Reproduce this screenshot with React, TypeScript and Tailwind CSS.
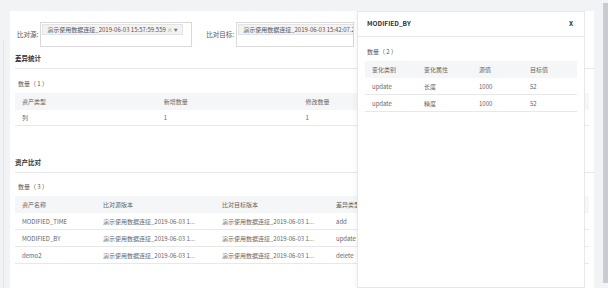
import React from 'react'

const font = { fontFamily: '"Noto Sans CJK SC", "Liberation Sans", sans-serif' }

const srcTag = '演示使用数据连接_2019-06-03 15:57:59.559'
const dstTag = '演示使用数据连接_2019-06-03 15:42:07.231'
const ver = '演示使用数据连接_2019-06-03 1...'

const assets = [
  { name: 'MODIFIED_TIME', src: ver, dst: ver, type: 'add' },
  { name: 'MODIFIED_BY', src: ver, dst: ver, type: 'update' },
  { name: 'demo2', src: ver, dst: ver, type: 'delete' },
]

const changes = [
  { kind: 'update', attr: '长度', from: '1000', to: '52' },
  { kind: 'update', attr: '精度', from: '1000', to: '52' },
]

function SelectBox({ label, value, width, arrow }: { label: string; value: string; width: string; arrow?: boolean }) {
  return (
    <div className="flex items-center">
      <span className="mr-[2px] text-[6.5px] text-[#555]">{label}</span>
      <div className={`h-[25px] shrink-0 overflow-hidden border border-[#d9d9d9] bg-white p-[1px] ${width}`}>
        <div className="flex h-[11px] w-max items-center whitespace-nowrap border border-[#e3e3e3] bg-[#f3f3f3] px-[4px] text-[6px] leading-none text-[#555]">
          {value}
          {arrow && (
            <>
              <span className="ml-[1px] text-[#999]">×</span>
              <span className="ml-[1px] text-[4px] text-[#777]">▼</span>
            </>
          )}
        </div>
      </div>
    </div>
  )
}

export default function App() {
  return (
    <div className="relative flex h-[288px] w-[608px] overflow-hidden bg-[#f2f3f5]" style={font}>
      {/* left strip */}
      <div className="w-[10px] shrink-0 pt-[40px]">
        <div className="ml-[3px] h-full w-px bg-[#e4e6ea]" />
      </div>

      {/* main panel */}
      <div className="relative mt-[11px] w-[584px] shrink-0 overflow-hidden bg-white">
        <div className="pl-[5px] pt-[11px]">
          <div className="flex items-center gap-[14px] pl-[2px]">
            <SelectBox label="比对源:" value={srcTag} width="w-[152px]" arrow />
            <SelectBox label="比对目标:" value={dstTag} width="w-[118px]" />
          </div>

          {/* 差异统计 */}
          <div className="mt-[6px] border-b border-[#e5e7eb] pb-[5px] text-[6.5px] font-bold leading-[10px] text-[#333]">差异统计</div>
          <div className="mt-[10px] pl-[3px] text-[6px] leading-[9px] text-[#555]">数量（ 1 ）</div>
          <div className="mt-[5px] w-[574px] text-[6px] text-[#666]">
            <div className="grid h-[17px] grid-cols-4 items-center bg-[#f5f6f7] pl-[7px]">
              <span>资产类型</span>
              <span>新增数量</span>
              <span>修改数量</span>
              <span>删除数量</span>
            </div>
            <div className="grid h-[16px] grid-cols-4 items-center border-b border-[#e8e8e8] pl-[7px]">
              <span>列</span>
              <span>1</span>
              <span>1</span>
              <span>1</span>
            </div>
          </div>

          {/* 资产比对 */}
          <div className="mt-[31px] border-b border-[#e5e7eb] pb-[5px] text-[6.5px] font-bold leading-[10px] text-[#333]">资产比对</div>
          <div className="mt-[9px] pl-[3px] text-[6px] leading-[9px] text-[#555]">数量（ 3 ）</div>
          <div className="mt-[5px] w-[574px] text-[6px] text-[#666]">
            <div className="grid h-[17px] grid-cols-[81px_119px_114px_1fr] items-center bg-[#f5f6f7] pl-[7px]">
              <span>资产名称</span>
              <span>比对源版本</span>
              <span>比对目标版本</span>
              <span>差异类型</span>
            </div>
            {assets.map((a) => (
              <div
                key={a.name}
                className="grid h-[17px] grid-cols-[81px_119px_114px_1fr] items-center whitespace-nowrap border-b border-[#e8e8e8] pl-[7px]"
              >
                <span>{a.name}</span>
                <span>{a.src}</span>
                <span>{a.dst}</span>
                <span>{a.type}</span>
              </div>
            ))}
          </div>
        </div>

        {/* drawer */}
        <div className="absolute bottom-0 left-[347px] top-0 w-[228px] border border-[#e8e8e8] bg-white shadow-[-2px_0_4px_rgba(0,0,0,0.04)]">
          <div className="flex h-[25px] items-center justify-between border-b border-[#e8e8e8] pl-[9px] pr-[11px] text-[6.5px] font-bold text-[#333]">
            <span>MODIFIED_BY</span>
            <span>X</span>
          </div>
          <div className="mt-[10px] pl-[9px] text-[6px] leading-[9px] text-[#555]">数量（ 2 ）</div>
          <div className="mx-[7px] mt-[5px] text-[6px] text-[#666]">
            <div className="grid h-[17px] grid-cols-[52px_55px_51px_1fr] items-center bg-[#f5f6f7] pl-[7px]">
              <span>变化类别</span>
              <span>变化属性</span>
              <span>源值</span>
              <span>目标值</span>
            </div>
            {changes.map((c) => (
              <div key={c.attr} className="grid h-[17px] grid-cols-[52px_55px_51px_1fr] items-center border-b border-[#e8e8e8] pl-[7px]">
                <span>{c.kind}</span>
                <span>{c.attr}</span>
                <span>{c.from}</span>
                <span>{c.to}</span>
              </div>
            ))}
          </div>
        </div>
      </div>

      {/* gutter + scrollbar */}
      <div className="w-[9px] shrink-0" />
      <div className="mt-[3px] h-[280px] w-[5px] shrink-0 bg-[#c9cbd0]" />
    </div>
  )
}
